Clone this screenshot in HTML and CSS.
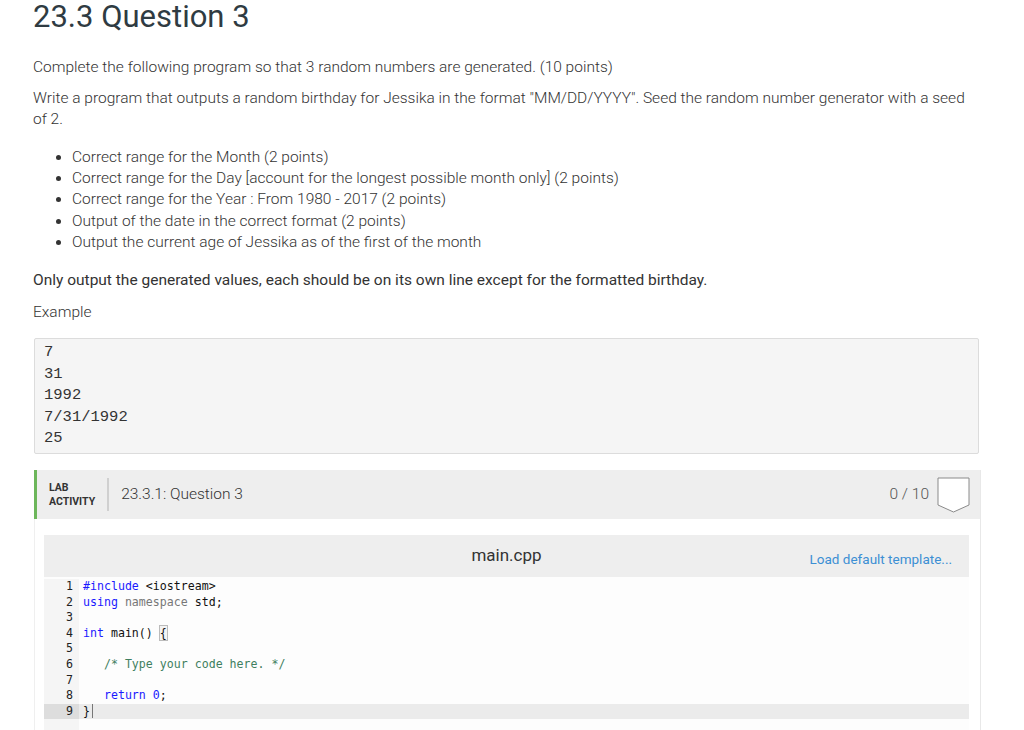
FILE: index.html
```html
<!DOCTYPE html>
<html>
<head>
<meta charset="utf-8">
<link rel="stylesheet" href="styles.css">
</head>
<body>
<div class="page">
  <h1 class="title">23.3 Question 3</h1>
  <p class="para first">Complete the following program so that 3 random numbers are generated. (10 points)</p>
  <p class="para">Write a program that outputs a random birthday for Jessika in the format "MM/DD/YYYY". Seed the random number generator with a seed of 2.</p>
  <ul class="list">
    <li>Correct range for the Month (2 points)</li>
    <li>Correct range for the Day [account for the longest possible month only] (2 points)</li>
    <li>Correct range for the Year : From 1980 - 2017 (2 points)</li>
    <li>Output of the date in the correct format (2 points)</li>
    <li>Output the current age of Jessika as of the first of the month</li>
  </ul>
  <p class="para strong">Only output the generated values, each should be on its own line except for the formatted birthday.</p>
  <p class="para example">Example</p>
  <pre class="sample">7
31
1992
7/31/1992
25</pre>

  <div class="lab">
    <div class="lab-head">
      <div class="lab-label">LAB<br>ACTIVITY</div>
      <div class="lab-divider"></div>
      <div class="lab-title">23.3.1: Question 3</div>
      <div class="lab-score">0 / 10</div>
      <svg class="badge" width="33" height="37" viewBox="0 0 33 37">
        <path d="M1 1 H32 V28 L16.5 35 L1 28 Z" fill="#fff" stroke="#8a8a8a" stroke-width="1"/>
      </svg>
    </div>
    <div class="lab-body">
      <div class="editor">
        <div class="editor-head">
          <span class="filename">main.cpp</span>
          <a class="template">Load default template...</a>
        </div>
        <div class="code">
          <div class="line"><span class="num">1</span><span class="src"><span class="kw">#include</span> &lt;iostream&gt;</span></div>
          <div class="line"><span class="num">2</span><span class="src"><span class="kw">using</span> <span class="ns">namespace</span> std;</span></div>
          <div class="line"><span class="num">3</span><span class="src"></span></div>
          <div class="line"><span class="num">4</span><span class="src"><span class="kw">int</span> main() <span class="brace">{</span></span></div>
          <div class="line"><span class="num">5</span><span class="src"></span></div>
          <div class="line"><span class="num">6</span><span class="src">   <span class="cm">/* Type your code here. */</span></span></div>
          <div class="line"><span class="num">7</span><span class="src"></span></div>
          <div class="line"><span class="num">8</span><span class="src">   <span class="kw">return</span> <span class="kw">0</span>;</span></div>
          <div class="line active"><span class="num">9</span><span class="src">}<span class="cursor"></span></span></div>
          <div class="line filler"><span class="num"></span><span class="src"></span></div>
        </div>
      </div>
    </div>
  </div>
</div>
</body>
</html>
```

FILE: styles.css
```css
html, body {
  margin: 0;
  padding: 0;
  background: #ffffff;
  height: 730px;
  overflow: hidden;
}

.page {
  width: 948px;
  padding-left: 33px;
  font-family: Roboto, "Liberation Sans", sans-serif;
  color: #333333;
}

.title {
  margin: 0;
  font-size: 31px;
  font-weight: 400;
  line-height: 33px;
  color: #2f3b42;
}

.para {
  margin: 10px 0 0 0;
  font-size: 15.5px;
  font-weight: 300;
  line-height: 21px;
  color: #333;
}

.para.first {
  margin-top: 24px;
}

.list {
  margin: 17px 0 0 0;
  padding-left: 39px;
  font-size: 15.5px;
  font-weight: 300;
  line-height: 21.2px;
}

.para.strong {
  margin-top: 17px;
  font-weight: 400;
}

.para.example {
  margin-top: 11px;
}

.sample {
  margin: 15px 2px 0 1px;
  padding: 3px 9px 3px 9px;
  background: #f5f5f5;
  border: 1px solid #dcdcdc;
  border-radius: 2px;
  font-family: "Liberation Mono", "DejaVu Sans Mono", monospace;
  font-size: 15.5px;
  line-height: 21.6px;
  color: #333;
}

.lab {
  margin-top: 16px;
  margin-left: 1px;
  border-left: 1px solid #efefef;
  border-right: 1px solid #e8e8e8;
}

.lab-head {
  display: flex;
  align-items: center;
  height: 49px;
  background: #eeeeee;
  border-left: 3px solid #6db65b;
  margin-left: -1px;
  padding: 0 10px 0 12px;
}

.lab-label {
  font-size: 10.5px;
  font-weight: 700;
  line-height: 14px;
  color: #333;
  padding-top: 1px;
}

.lab-divider {
  width: 2px;
  height: 33px;
  background: #d0d0d0;
  margin: 0 12px 0 12px;
}

.lab-title {
  font-size: 15.5px;
  font-weight: 300;
  color: #333;
  flex: 1;
}

.lab-score {
  font-size: 15.5px;
  font-weight: 300;
  color: #555;
  margin-right: 8px;
}

.badge {
  display: block;
  margin-top: 2px;
}

.lab-body {
  padding: 16px 11px 0 9px;
}

.editor {
  background: #fdfdfd;
}

.editor-head {
  display: flex;
  align-items: center;
  height: 42px;
  background: #eeeeee;
  position: relative;
  justify-content: flex-end;
  padding-right: 17px;
}

.filename {
  position: absolute;
  left: 0;
  right: 0;
  text-align: center;
  font-size: 17px;
  font-weight: 400;
  color: #333;
  top: 10px;
}

.template {
  font-size: 13.5px;
  font-weight: 400;
  color: #3c8fd4;
  position: relative;
  top: 3px;
}

.code {
  font-family: "DejaVu Sans Mono", monospace;
  font-size: 11.6px;
  padding-top: 2px;
}

.line {
  display: flex;
  height: 15.6px;
  line-height: 15.6px;
}

.num {
  width: 29px;
  padding-right: 6px;
  text-align: right;
  background: #f5f5f5;
  color: #222;
  flex: none;
}

.src {
  padding-left: 4px;
  white-space: pre;
  color: #111;
  flex: 1;
}

.line.active .num {
  background: #dddddd;
}

.line.active .src {
  background: #ebebeb;
}

.line.filler {
  height: 14px;
}

.kw { color: #1a1aff; }
.ns { color: #777777; }
.cm { color: #3f7f5f; }

.brace {
  outline: 1px solid #bbbbbb;
  background: #f4f4f4;
}

.cursor {
  display: inline-block;
  width: 1px;
  height: 14px;
  background: #777;
  vertical-align: middle;
  margin-left: 2px;
}
```
